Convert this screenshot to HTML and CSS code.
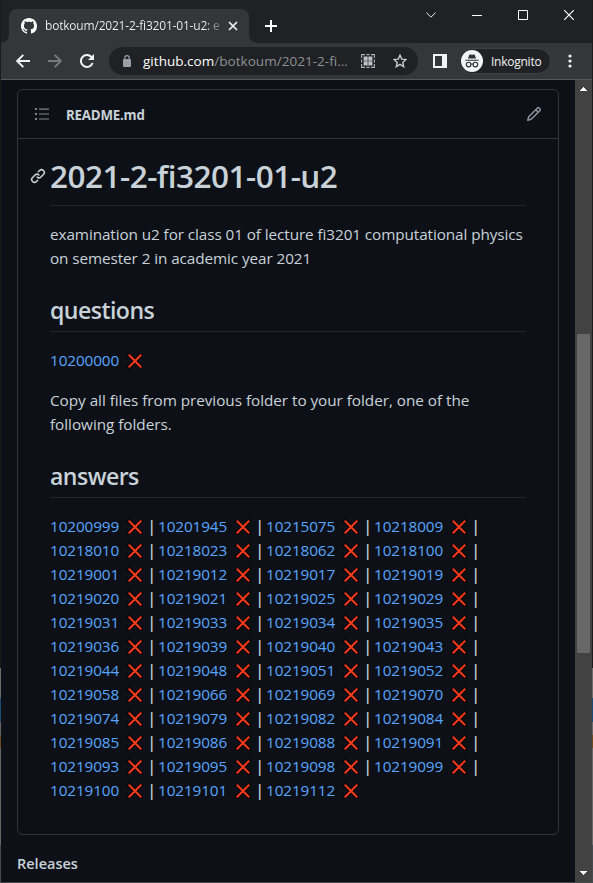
FILE: index.html
```html
<!DOCTYPE html>
<html lang="en">
<head>
<meta charset="utf-8">
<title>botkoum/2021-2-fi3201-01-u2</title>
<link rel="stylesheet" href="styles.css">
</head>
<body>
<svg class="defs" width="0" height="0"><symbol id="x" viewBox="0 0 16 16"><path d="M2 2 14 14M14 2 2 14" stroke="#050507" stroke-width="4" stroke-linecap="round"/><path d="M2.3 2.3 13.7 13.7M13.7 2.3 2.3 13.7" stroke="#f5391b" stroke-width="2.1" stroke-linecap="round"/></symbol></svg>
<div class="window">
  <header class="tabstrip">
    <div class="tab">
      <svg class="favicon" width="16" height="16" viewBox="0 0 16 16" fill="#fff"><path d="M8 0C3.58 0 0 3.58 0 8c0 3.54 2.29 6.53 5.47 7.59.4.07.55-.17.55-.38 0-.19-.01-.82-.01-1.49-2.01.37-2.53-.49-2.69-.94-.09-.23-.48-.94-.82-1.13-.28-.15-.68-.52-.01-.53.63-.01 1.08.58 1.23.82.72 1.21 1.87.87 2.33.66.07-.52.28-.87.51-1.07-1.78-.2-3.64-.89-3.64-3.95 0-.87.31-1.59.82-2.15-.08-.2-.36-1.02.08-2.12 0 0 .67-.21 2.2.82.64-.18 1.32-.27 2-.27s1.36.09 2 .27c1.53-1.04 2.2-.82 2.2-.82.44 1.1.16 1.92.08 2.12.51.56.82 1.27.82 2.15 0 3.07-1.87 3.75-3.65 3.95.29.25.54.73.54 1.48 0 1.07-.01 1.93-.01 2.2 0 .21.15.46.55.38A8.01 8.01 0 0 0 16 8c0-4.42-3.58-8-8-8z"/></svg>
      <span class="tab-title">botkoum/2021-2-fi3201-01-u2: e</span>
      <svg width="10" height="10" viewBox="0 0 10 10" stroke="#f1f3f4" stroke-width="1.7"><path d="M1 1 9 9M9 1 1 9"/></svg>
    </div>
    <svg class="newtab" width="12" height="12" viewBox="0 0 12 12" stroke="#fff" stroke-width="2"><path d="M6 0V12M0 6H12"/></svg>
    <div class="controls">
      <svg width="10" height="12" viewBox="0 0 10 12" fill="none" stroke="#eee"><path d="M.4 3.5 5 8.2 9.6 3.5"/></svg>
      <svg width="10" height="12" viewBox="0 0 10 12" stroke="#fff"><path d="M0 6.5H10"/></svg>
      <svg width="10" height="12" viewBox="0 0 10 12" fill="none" stroke="#fff"><path d="M.5 1.5H9.5V10.5H.5Z"/></svg>
      <svg width="10" height="12" viewBox="0 0 10 12" stroke="#fff" stroke-width="1.1"><path d="M.2 1.2 9.8 10.8M9.8 1.2.2 10.8"/></svg>
    </div>
  </header>
  <div class="toolbar">
    <svg width="14" height="14" viewBox="0 0 14 14" fill="none" stroke="#f1f3f4" stroke-width="1.9"><path d="M14 7H1.5M7.3 .8 1.2 7 7.3 13.2"/></svg>
    <svg class="fwd" width="14" height="14" viewBox="0 0 14 14" fill="none" stroke="#77797c" stroke-width="1.9"><path d="M0 7H12.5M6.7 .8 12.8 7 6.7 13.2"/></svg>
    <svg class="reload" width="14" height="14" viewBox="0 0 14 14" fill="none" stroke="#f1f3f4" stroke-width="2"><path d="M12.6 9A6 6 0 1 1 11.3 2.8L12 3.6"/><path d="M14 0V6H8Z" fill="#f1f3f4" stroke="none"/></svg>
    <div class="omnibox">
      <svg width="8" height="12" viewBox="0 0 8 12"><rect y="4" width="8" height="8" rx="1" fill="#9aa0a6"/><path d="M1.8 4.5V2.8A2.2 2.2 0 0 1 6.2 2.8V4.5" fill="none" stroke="#9aa0a6" stroke-width="1.2"/></svg>
      <span class="url"><b>github.com</b>/botkoum/2021-2-fi...</span>
      <svg class="qr" width="14" height="14" viewBox="0 0 14 14" fill="none" stroke="#aeb2b7" stroke-width="1.1"><path d="M.6 4V.6H4M10 .6H13.4V4M13.4 10V13.4H10M4 13.4H.6V10M5.5 .6H8.5M5.5 13.4H8.5M.6 5.5V8.5M13.4 5.5V8.5"/><path d="M2.6 2.6H6.7V6.7H2.6ZM7.3 2.6H11.4V6.7H7.3ZM2.6 7.3H6.7V11.4H2.6ZM7.3 7.3H11.4V11.4H7.3Z" fill="#bdc1c6" stroke="none"/></svg>
      <svg class="star" width="14" height="14" viewBox="0 0 14 14" fill="none" stroke="#c6c9cc" stroke-width="1.4"><path d="M7 1.1 8.7 5.1 13 5.5 9.8 8.4 10.7 12.7 7 10.4 3.3 12.7 4.2 8.4 1 5.5 5.3 5.1Z"/></svg>
    </div>
    <svg class="panel" width="14" height="14" viewBox="0 0 14 14"><path d="M0 0H14V14H0ZM2 2V12H9V2Z" fill="#f1f3f4" fill-rule="evenodd"/></svg>
    <div class="incognito">
      <svg width="22" height="22" viewBox="0 0 22 22"><circle cx="11" cy="11" r="11" fill="#f1f3f4"/><path d="M7 8.6 8.3 4.8Q8.5 4.3 9 4.4L11 4.8 13 4.4Q13.5 4.3 13.7 4.8L15 8.6ZM4.3 9.7H17.7V10.8H4.3Z" fill="#303134"/><g fill="none" stroke="#303134" stroke-width="1.1"><circle cx="7.6" cy="14.6" r="2.3"/><circle cx="14.4" cy="14.6" r="2.3"/><path d="M9.9 14.3Q11 13.6 12.1 14.3"/></g></svg>
      <span>Inkognito</span>
    </div>
    <svg class="dots" width="4" height="14" viewBox="0 0 4 14" fill="#f1f3f4"><circle cx="2" cy="2" r="1.6"/><circle cx="2" cy="7" r="1.6"/><circle cx="2" cy="12" r="1.6"/></svg>
  </div>
  <div class="viewport">
    <main class="page">
      <section class="readme">
        <div class="readme-head">
          <svg width="14" height="12" viewBox="0 0 14 12" fill="#7d8590"><path d="M0 0H2V2H0ZM0 5H2V7H0ZM0 10H2V12H0ZM4 .5H14V1.7H4ZM4 5.4H14V6.6H4ZM4 10.4H14V11.6H4Z"/></svg>
          <span class="filename">README.md</span>
          <svg class="pencil" width="16" height="16" viewBox="0 0 16 16" fill="#8b949e"><path d="M11.013 1.427a1.75 1.75 0 0 1 2.474 0l1.086 1.086a1.75 1.75 0 0 1 0 2.474l-8.61 8.61c-.21.21-.47.364-.756.445l-3.251.93a.75.75 0 0 1-.927-.928l.929-3.25c.081-.286.235-.547.445-.758l8.61-8.61Zm.176 4.823L9.75 4.81l-6.286 6.287a.253.253 0 0 0-.064.108l-.558 1.953 1.953-.558a.253.253 0 0 0 .108-.064Zm1.238-3.763a.25.25 0 0 0-.354 0L10.811 3.75l1.439 1.44 1.263-1.263a.25.25 0 0 0 0-.354Z"/></svg>
        </div>
        <article class="body">
          <div class="title">
            <svg width="16" height="16" viewBox="0 0 16 16" fill="#c9d1d9"><path d="m7.775 3.275 1.25-1.25a3.5 3.5 0 1 1 4.95 4.95l-2.5 2.5a3.5 3.5 0 0 1-4.95 0 .751.751 0 0 1 1.06-1.06 2 2 0 0 0 2.83 0l2.5-2.5a2 2 0 0 0-2.83-2.83l-1.25 1.25a.75.75 0 0 1-1.06-1.06Zm-4.69 9.64a2 2 0 0 0 2.83 0l1.25-1.25a.75.75 0 0 1 1.06 1.06l-1.25 1.25a3.5 3.5 0 1 1-4.95-4.95l2.5-2.5a3.5 3.5 0 0 1 4.95 0 .751.751 0 0 1-1.06 1.06 2 2 0 0 0-2.83 0l-2.5 2.5a2 2 0 0 0 0 2.83Z"/></svg>
            <h1>2021-2-fi3201-01-u2</h1>
          </div>
          <p class="intro">examination u2 for class 01 of lecture fi3201 computational physics<br>on semester 2 in academic year 2021</p>
          <h2>questions</h2>
          <div class="grid"><div><a>10200000</a><svg><use href="#x"/></svg></div></div>
          <p class="copy">Copy all files from previous folder to your folder, one of the<br>following folders.</p>
          <h2>answers</h2>
          <div class="grid">
            <div><a>10200999</a><svg><use href="#x"/></svg><i>|</i></div>
            <div><a>10201945</a><svg><use href="#x"/></svg><i>|</i></div>
            <div><a>10215075</a><svg><use href="#x"/></svg><i>|</i></div>
            <div><a>10218009</a><svg><use href="#x"/></svg><i>|</i></div>
            <div><a>10218010</a><svg><use href="#x"/></svg><i>|</i></div>
            <div><a>10218023</a><svg><use href="#x"/></svg><i>|</i></div>
            <div><a>10218062</a><svg><use href="#x"/></svg><i>|</i></div>
            <div><a>10218100</a><svg><use href="#x"/></svg><i>|</i></div>
            <div><a>10219001</a><svg><use href="#x"/></svg><i>|</i></div>
            <div><a>10219012</a><svg><use href="#x"/></svg><i>|</i></div>
            <div><a>10219017</a><svg><use href="#x"/></svg><i>|</i></div>
            <div><a>10219019</a><svg><use href="#x"/></svg><i>|</i></div>
            <div><a>10219020</a><svg><use href="#x"/></svg><i>|</i></div>
            <div><a>10219021</a><svg><use href="#x"/></svg><i>|</i></div>
            <div><a>10219025</a><svg><use href="#x"/></svg><i>|</i></div>
            <div><a>10219029</a><svg><use href="#x"/></svg><i>|</i></div>
            <div><a>10219031</a><svg><use href="#x"/></svg><i>|</i></div>
            <div><a>10219033</a><svg><use href="#x"/></svg><i>|</i></div>
            <div><a>10219034</a><svg><use href="#x"/></svg><i>|</i></div>
            <div><a>10219035</a><svg><use href="#x"/></svg><i>|</i></div>
            <div><a>10219036</a><svg><use href="#x"/></svg><i>|</i></div>
            <div><a>10219039</a><svg><use href="#x"/></svg><i>|</i></div>
            <div><a>10219040</a><svg><use href="#x"/></svg><i>|</i></div>
            <div><a>10219043</a><svg><use href="#x"/></svg><i>|</i></div>
            <div><a>10219044</a><svg><use href="#x"/></svg><i>|</i></div>
            <div><a>10219048</a><svg><use href="#x"/></svg><i>|</i></div>
            <div><a>10219051</a><svg><use href="#x"/></svg><i>|</i></div>
            <div><a>10219052</a><svg><use href="#x"/></svg><i>|</i></div>
            <div><a>10219058</a><svg><use href="#x"/></svg><i>|</i></div>
            <div><a>10219066</a><svg><use href="#x"/></svg><i>|</i></div>
            <div><a>10219069</a><svg><use href="#x"/></svg><i>|</i></div>
            <div><a>10219070</a><svg><use href="#x"/></svg><i>|</i></div>
            <div><a>10219074</a><svg><use href="#x"/></svg><i>|</i></div>
            <div><a>10219079</a><svg><use href="#x"/></svg><i>|</i></div>
            <div><a>10219082</a><svg><use href="#x"/></svg><i>|</i></div>
            <div><a>10219084</a><svg><use href="#x"/></svg><i>|</i></div>
            <div><a>10219085</a><svg><use href="#x"/></svg><i>|</i></div>
            <div><a>10219086</a><svg><use href="#x"/></svg><i>|</i></div>
            <div><a>10219088</a><svg><use href="#x"/></svg><i>|</i></div>
            <div><a>10219091</a><svg><use href="#x"/></svg><i>|</i></div>
            <div><a>10219093</a><svg><use href="#x"/></svg><i>|</i></div>
            <div><a>10219095</a><svg><use href="#x"/></svg><i>|</i></div>
            <div><a>10219098</a><svg><use href="#x"/></svg><i>|</i></div>
            <div><a>10219099</a><svg><use href="#x"/></svg><i>|</i></div>
            <div><a>10219100</a><svg><use href="#x"/></svg><i>|</i></div>
            <div><a>10219101</a><svg><use href="#x"/></svg><i>|</i></div>
            <div><a>10219112</a><svg><use href="#x"/></svg></div>
          </div>
        </article>
      </section>
      <h3>Releases</h3>
    </main>
    <div class="scrollbar">
      <svg width="7" height="4" viewBox="0 0 7 4" fill="#fff" shape-rendering="crispEdges"><path d="M3 0H4V1H5V2H6V3H7V4H0V3H1V2H2V1H3Z"/></svg>
      <div class="thumb"></div>
      <svg width="7" height="4" viewBox="0 0 7 4" fill="#fff" shape-rendering="crispEdges"><path d="M0 0H7V1H6V2H5V3H4V4H3V3H2V2H1V1H0Z"/></svg>
    </div>
  </div>
</div>
</body>
</html>
```
FILE: styles.css
```css
* { box-sizing: border-box; }
body {
  margin: 0;
  width: 593px;
  height: 883px;
  overflow: hidden;
  font-family: "Open Sans", "Noto Sans", sans-serif;
  background: linear-gradient(#1b1b1b 0 668px, #6b6b6b 668px 698px, #1d4a70 698px 722px, #666 722px 735px, #6b4a20 735px 748px, #666 748px 845px, #454a50 845px);
}
svg { display: block; flex: none; }
.defs { position: absolute; }
.window {
  margin: 0 1px;
  height: 882px;
  background: #0d1117;
  display: flex;
  flex-direction: column;
}
.tabstrip {
  height: 43px;
  background: #202124;
  display: flex;
  align-items: flex-start;
  flex: none;
}
.tab {
  margin: 9px 0 0 8px;
  width: 240px;
  height: 34px;
  border-radius: 8px 8px 0 0;
  background: #35363a;
  display: flex;
  align-items: center;
  padding: 0 11px 0 12px;
  position: relative;
}
.tab::before, .tab::after {
  content: "";
  position: absolute;
  bottom: 0;
  width: 8px;
  height: 8px;
}
.tab::before { left: -8px; background: radial-gradient(circle at 0 0, transparent 7.5px, #35363a 8px); }
.tab::after { right: -8px; background: radial-gradient(circle at 100% 0, transparent 7.5px, #35363a 8px); }
.tab-title {
  margin: 0 8px 1px 8px;
  width: 175px;
  flex: none;
  overflow: hidden;
  white-space: nowrap;
  font-size: 12px;
  letter-spacing: -0.2px;
  color: transparent;
  background: linear-gradient(90deg, #f1f3f4 160px, #35363a 180px);
  background-clip: text;
}
.newtab { margin: 20px 0 0 16px; }
.controls {
  margin: 9px 18px 0 auto;
  display: flex;
  gap: 36px;
}
.toolbar {
  height: 37px;
  flex: none;
  background: #35363a;
  border-bottom: 1px solid #58595c;
  display: flex;
  align-items: center;
  padding: 0 0 0 15px;
}
.fwd { margin-left: 18px; }
.reload { margin-left: 18px; }
.omnibox {
  margin-left: 15px;
  width: 309px;
  height: 28px;
  border-radius: 14px;
  background: #202124;
  display: flex;
  align-items: center;
  padding-left: 14px;
}
.url {
  margin-left: 12px;
  width: 207px;
  white-space: nowrap;
  font-size: 13.5px;
  letter-spacing: 0.03px;
  color: #8d9196;
}
.url b { font-weight: 400; color: #fff; }
.qr { margin-left: 11px; }
.star { margin-left: 18px; }
.panel { margin-left: 15px; }
.incognito {
  margin-left: 12px;
  width: 92px;
  height: 26px;
  border-radius: 13px;
  border: 1px solid #3f4043;
  background: #202124;
  display: flex;
  align-items: center;
  gap: 8px;
  padding-left: 1px;
  color: #f1f3f4;
  font-size: 12px;
  letter-spacing: -0.25px;
}
.dots { margin-left: 17px; }
.viewport { flex: 1; display: flex; min-height: 0; }
.page { flex: 1; padding: 9px 16px 0; color: #c9d1d9; }
.readme {
  width: 542px;
  height: 746px;
  border: 1px solid #30363d;
  border-radius: 6px;
}
.readme-head {
  height: 49px;
  border-bottom: 1px solid #30363d;
  display: flex;
  align-items: center;
  padding: 0 16px 0 17px;
}
.readme-head svg { margin-top: -1px; }
.filename { margin: 2px 0 0 17px; font-size: 13.3px; font-weight: 700; letter-spacing: -0.2px; }
.readme-head .pencil { margin-left: auto; margin-top: 0; }
.body { padding: 17px 32px 0; font-size: 15.3px; line-height: 24px; }
.title { display: flex; align-items: flex-start; margin-left: -20px; }
.title svg { margin: 12px 4px 0 0; }
h1, h2, h3, p { margin: 0; }
h1 {
  flex: 1;
  height: 50px;
  border-bottom: 1px solid #21262d;
  font-size: 31.5px;
  line-height: 40px;
  font-weight: 600;
  letter-spacing: -0.5px;
}
h2 {
  margin-top: 24px;
  height: 38px;
  border-bottom: 1px solid #21262d;
  font-size: 23.1px;
  line-height: 33px;
  font-weight: 600;
  letter-spacing: -0.55px;
}
p { margin-top: 16px; white-space: nowrap; }
.intro { letter-spacing: -0.09px; }
.copy { letter-spacing: -0.04px; }
.grid {
  margin-top: 16px;
  display: grid;
  grid-template-columns: repeat(4, 108px);
  grid-auto-rows: 24px;
}
.grid div { display: flex; align-items: center; }
.grid a { width: 69px; flex: none; color: #58a6ff; letter-spacing: -0.12px; }
.grid svg { width: 16px; height: 16px; margin: 2px 0 0 7.6px; }
.grid i { margin-left: 5px; width: 8px; text-align: center; font-style: normal; font-weight: 600; }
h3 { margin-top: 18px; font-size: 14.5px; line-height: 22px; font-weight: 600; letter-spacing: 0; }
.scrollbar {
  width: 17px;
  flex: none;
  background: #424242;
  display: flex;
  flex-direction: column;
  align-items: center;
  padding: 7px 0;
}
.thumb { width: 13px; height: 319px; margin: 243px 0 auto; background: #686868; }
```
